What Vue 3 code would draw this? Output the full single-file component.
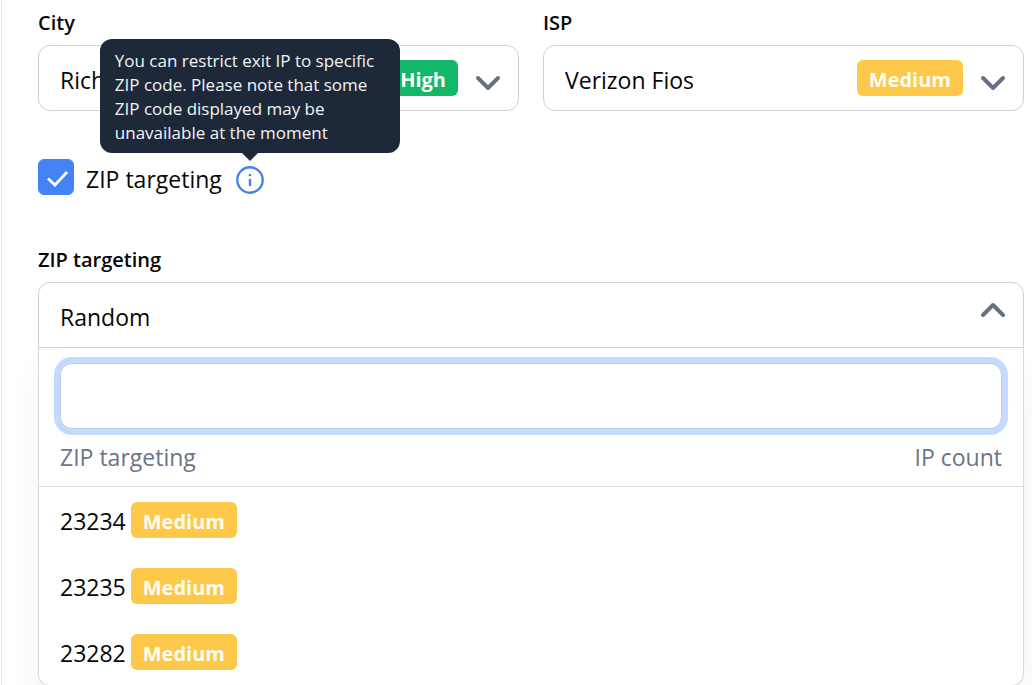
<script setup>
import { ref } from 'vue'

const fields = [
  { id: 'city', label: 'City', value: 'Richmond', level: 'High' },
  { id: 'isp', label: 'ISP', value: 'Verizon Fios', level: 'Medium' },
]
const zips = [
  { code: '23234', level: 'Medium' },
  { code: '23235', level: 'Medium' },
  { code: '23282', level: 'Medium' },
]

const targeting = ref(true)
const open = ref(true)
const search = ref('')
const selected = ref('Random')
</script>

<template>
  <main class="page">
    <div class="columns">
      <div v-for="f in fields" :key="f.id" class="field">
        <label class="label" :for="f.id">{{ f.label }}</label>
        <div class="control">
          <select :id="f.id" class="select">
            <option>{{ f.value }}</option>
          </select>
          <span class="adornment">
            <span class="badge" :class="f.level.toLowerCase()">{{ f.level }}</span>
            <svg class="chevron" viewBox="0 0 28 28" aria-hidden="true">
              <path d="M4 14 L14 24 L24 14" />
            </svg>
          </span>
        </div>
      </div>
    </div>

    <div class="toggle">
      <span class="check">
        <input id="targeting" v-model="targeting" type="checkbox" />
        <svg v-if="targeting" viewBox="0 0 36 36" aria-hidden="true">
          <path d="M10 19.5 L17 26 L29 13" />
        </svg>
      </span>
      <label for="targeting">ZIP targeting</label>
      <span class="info">
        <button type="button" aria-label="About ZIP targeting" aria-describedby="zip-tip">
          <svg viewBox="0 0 28 28" aria-hidden="true">
            <circle cx="14" cy="14" r="12.7" />
            <path d="M14 13 V20" />
            <path d="M14 8 V10" />
          </svg>
        </button>
        <span id="zip-tip" class="tooltip" role="tooltip">
          You can restrict exit IP to specific ZIP code. Please note that some
          ZIP code displayed may be unavailable at the moment
        </span>
      </span>
    </div>

    <div class="field">
      <label class="label" for="zip">ZIP targeting</label>
      <div class="control">
        <select
          id="zip"
          v-model="selected"
          class="select"
          :class="{ open }"
          @mousedown.prevent="open = !open"
        >
          <option>Random</option>
          <option v-for="z in zips" :key="z.code">{{ z.code }}</option>
        </select>
        <span class="adornment">
          <svg class="chevron" :class="{ up: open }" viewBox="0 0 28 28" aria-hidden="true">
            <path d="M4 14 L14 24 L24 14" />
          </svg>
        </span>
      </div>
      <div v-if="open" class="panel">
        <div class="search">
          <input v-model="search" type="text" aria-label="Search ZIP" />
        </div>
        <div class="head">
          <span>ZIP targeting</span>
          <span>IP count</span>
        </div>
        <ul class="options">
          <li v-for="z in zips" :key="z.code">
            <button type="button" class="option" @click="selected = z.code">
              <span class="code">{{ z.code }}</span>
              <span class="badge" :class="z.level.toLowerCase()">{{ z.level }}</span>
            </button>
          </li>
        </ul>
      </div>
    </div>
  </main>
</template>

<style>
body {
  background: #fff;
  overflow: hidden;
}
</style>

<style scoped>
.page,
.page * {
  box-sizing: border-box;
}
.page {
  min-height: 100vh;
  margin-left: 1px;
  padding: 9px 8px 0 36px;
  border-left: 1px solid #e9eaee;
  font-family: "Open Sans", "Noto Sans", sans-serif;
  font-size: 23px;
  line-height: 32px;
  color: #080808;
}
button,
select,
input {
  font: inherit;
  color: inherit;
}
.columns {
  display: grid;
  grid-template-columns: 1fr 1fr;
  gap: 24px;
}
.field {
  display: flex;
  flex-direction: column;
}
.label {
  margin-bottom: 8px;
  font-size: 20px;
  font-weight: 600;
  line-height: 28px;
}
.control {
  display: grid;
  align-items: center;
}
.select,
.adornment {
  grid-area: 1 / 1;
}
.select {
  width: 100%;
  height: 66px;
  padding: 4px 21px 0;
  border: 1px solid #cfd0d4;
  border-radius: 12px;
  background: #fff;
  appearance: none;
}
.select.open {
  border-radius: 12px 12px 0 0;
}
.adornment {
  justify-self: end;
  display: flex;
  align-items: center;
  gap: 16px;
  margin-right: 17px;
  pointer-events: none;
}
.badge {
  display: block;
  height: 36px;
  padding: 2px 12px 0;
  border-radius: 6px;
  font-size: 20px;
  font-weight: 700;
  line-height: 36px;
  color: #fffdf5;
}
.high {
  background: #12b76a;
}
.medium {
  background: #fec84b;
}
.chevron {
  width: 28px;
  height: 28px;
  fill: none;
  stroke: #667085;
  stroke-width: 4;
  stroke-linecap: round;
  stroke-linejoin: round;
}
.chevron.up {
  transform: rotate(180deg);
}
.toggle {
  display: flex;
  align-items: center;
  gap: 12px;
  margin: 48px 0 51px;
}
.check {
  display: grid;
}
.check input,
.check svg {
  grid-area: 1 / 1;
  width: 36px;
  height: 36px;
  margin: 0;
}
.check input {
  border: 1px solid #cfd0d4;
  border-radius: 6px;
  background: #fff;
  appearance: none;
}
.check input:checked {
  border-color: #4482f5;
  background: #4482f5;
}
.check svg {
  fill: none;
  stroke: #fff;
  stroke-width: 2.8;
  pointer-events: none;
}
.toggle label {
  padding-top: 4px;
}
.info {
  position: relative;
  margin-left: 2px;
  padding-top: 6px;
}
.info button {
  display: block;
  padding: 0;
  border: 0;
  background: none;
}
.info svg {
  display: block;
  width: 28px;
  height: 28px;
  fill: none;
  stroke: #4482e6;
  stroke-width: 2.4;
}
.tooltip {
  position: absolute;
  bottom: 41px;
  left: 50%;
  width: 300px;
  padding: 10px 15px 8px;
  border-radius: 12px;
  background: #1d2939;
  font-size: 17px;
  line-height: 24px;
  color: #f2f4f7;
  transform: translateX(-50%);
}
.tooltip::after {
  content: "";
  position: absolute;
  top: 100%;
  left: 50%;
  border: 8px solid transparent;
  border-top-color: #1d2939;
  border-bottom: 0;
  transform: translateX(-50%);
}
.panel {
  border: 1px solid #d8d9dc;
  border-top: 0;
  border-radius: 0 0 12px 12px;
  background: #fff;
  box-shadow: 0 24px 36px rgba(16, 24, 40, 0.05);
}
.search {
  padding: 15px 21px 0;
}
.search input {
  display: block;
  width: 100%;
  height: 66px;
  padding: 0 20px;
  border: 1px solid #c0ccdf;
  border-radius: 12px;
  outline: 0;
  background: #fff;
  box-shadow: 0 0 0 6px #c3dafe;
}
.head {
  display: flex;
  justify-content: space-between;
  padding: 12px 21px 13px;
  border-bottom: 1px solid #d8d9dc;
  color: #6b7488;
}
.options {
  margin: 0;
  padding: 0;
  list-style: none;
}
.option {
  display: flex;
  align-items: center;
  gap: 5px;
  width: 100%;
  height: 66px;
  padding: 0 21px;
  border: 0;
  background: none;
  text-align: left;
}
.code {
  padding-top: 2px;
}
</style>
